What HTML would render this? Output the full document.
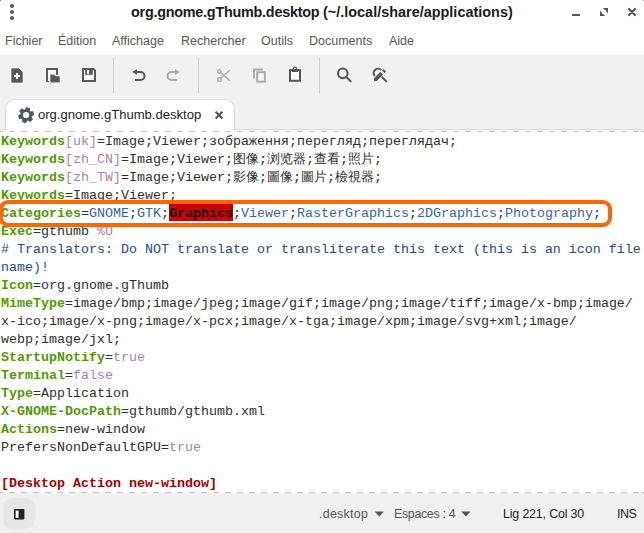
<!DOCTYPE html>
<html><head><meta charset="utf-8">
<style>
html,body{margin:0;padding:0;}
body{width:644px;height:533px;overflow:hidden;background:#fff;position:relative;font-family:"Liberation Sans",sans-serif;}
.abs{position:absolute;}
#title{left:0;top:0;width:644px;height:28px;background:#fff;}
#title .t{position:absolute;left:0;width:644px;text-align:center;top:4px;font-weight:bold;font-size:14.4px;color:#1a1a1a;white-space:nowrap;letter-spacing:-0.12px;}
#menu{left:0;top:28px;width:644px;height:27px;background:#fff;}
#menu span{position:absolute;top:5px;font-size:12.5px;line-height:16px;color:#555;white-space:nowrap;}
#tool{left:0;top:55px;width:644px;height:42px;background:#f1f1f1;}
#tabs{left:0;top:97px;width:644px;height:34px;background:linear-gradient(#f1f1f1 0 32px,#dcdcdc 32px 33px,#fff 33px);}
#tab{left:5px;top:2px;width:230px;height:32px;background:#fff;border-radius:10px 10px 0 0;border:1px solid #dcdcdc;border-bottom:none;box-sizing:border-box;}
#tab .l{position:absolute;left:32px;top:7px;font-size:13.05px;line-height:16px;color:#222;white-space:nowrap;}
.dash{left:0;width:644px;height:1px;background:repeating-linear-gradient(90deg,#c4c4c4 0 6px,transparent 6px 12px);background-position:-3px 0;}
#ed{left:0;top:132px;width:644px;height:360px;background:#fff;overflow:hidden;}
#ed .ln{position:absolute;left:1px;height:18px;line-height:18px;font-family:"Liberation Mono",monospace;font-size:13.333px;white-space:pre;color:#2e2e2e;}
.k{color:#4e9a06;font-weight:bold;}
.p{color:#ad7fa8;}
#ed .c{color:#204a87;}
.b{color:#3465a4;}
.g{color:#a40000;font-weight:bold;}
.cj{display:inline-block;width:13px;overflow:hidden;text-align:center;vertical-align:top;height:18px;}
#status{left:0;top:493px;width:644px;height:40px;background:#f0f0f0;}
#status span{position:absolute;top:13px;font-size:12.4px;line-height:16px;color:#555;white-space:nowrap;}
</style></head><body>
<div id="title" class="abs"><div class="t" style="text-align:left;left:131px;letter-spacing:-0.25px">org.gnome.gThumb.desktop</div><div class="t" style="text-align:left;left:323px;letter-spacing:0.02px">(~/.local/share/applications)</div>
</div>
<div id="menu" class="abs">
<span style="left:5px">Fichier</span><span style="left:58px">Édition</span><span style="left:112px">Affichage</span><span style="left:181px">Rechercher</span><span style="left:261px">Outils</span><span style="left:309px">Documents</span><span style="left:389px">Aide</span>
</div>
<div id="tool" class="abs"></div>
<div id="tabs" class="abs"><div id="tab" class="abs"><span class="l">org.gnome.gThumb.desktop</span></div></div>
<div class="dash abs" style="top:131px"></div>
<div id="ed" class="abs">
<div class="abs" style="left:169px;top:72px;width:64px;height:17px;background:#cc0000"></div>
<div class="ln" style="top:1px"><span class="k">Keywords</span><span class="p">[uk]</span>=Image;Viewer;зображення;перегляд;переглядач;</div>
<div class="ln" style="top:19px"><span class="k">Keywords</span><span class="p">[zh_CN]</span>=Image;Viewer;<span class="cj">图</span><span class="cj">像</span>;<span class="cj">浏</span><span class="cj">览</span><span class="cj">器</span>;<span class="cj">查</span><span class="cj">看</span>;<span class="cj">照</span><span class="cj">片</span>;</div>
<div class="ln" style="top:37px"><span class="k">Keywords</span><span class="p">[zh_TW]</span>=Image;Viewer;<span class="cj">影</span><span class="cj">像</span>;<span class="cj">圖</span><span class="cj">像</span>;<span class="cj">圖</span><span class="cj">片</span>;<span class="cj">檢</span><span class="cj">視</span><span class="cj">器</span>;</div>
<div class="ln" style="top:55px"><span class="k">Keywords</span>=Image;Viewer;</div>
<div class="ln" style="top:73px"><span class="k">Categories</span>=<span class="b">GNOME</span>;<span class="b">GTK</span>;<span style="color:#111;font-weight:bold">Graphics</span>;<span class="b">Viewer</span>;<span class="b">RasterGraphics</span>;<span class="b">2DGraphics</span>;<span class="b">Photography</span>;</div>
<div class="ln" style="top:91px"><span class="k">Exec</span>=gthumb <span class="p">%U</span></div>
<div class="ln c" style="top:109px"># Translators: Do NOT translate or transliterate this text (this is an icon file</div>
<div class="ln c" style="top:127px">name)!</div>
<div class="ln" style="top:145px"><span class="k">Icon</span>=org.gnome.gThumb</div>
<div class="ln" style="top:163px"><span class="k">MimeType</span>=image/bmp;image/jpeg;image/gif;image/png;image/tiff;image/x-bmp;image/</div>
<div class="ln" style="top:181px">x-ico;image/x-png;image/x-pcx;image/x-tga;image/xpm;image/svg+xml;image/</div>
<div class="ln" style="top:199px">webp;image/jxl;</div>
<div class="ln" style="top:217px"><span class="k">StartupNotify</span>=<span class="p">true</span></div>
<div class="ln" style="top:235px"><span class="k">Terminal</span>=<span class="p">false</span></div>
<div class="ln" style="top:253px"><span class="k">Type</span>=Application</div>
<div class="ln" style="top:271px"><span class="k">X-GNOME-DocPath</span>=gthumb/gthumb.xml</div>
<div class="ln" style="top:289px"><span class="k">Actions</span>=new-window</div>
<div class="ln" style="top:307px">PrefersNonDefaultGPU=<span class="p">true</span></div>
<div class="ln" style="top:343px"><span class="g">[Desktop Action new-window]</span></div>
<div class="abs" style="left:-1.5px;top:68px;width:613.5px;height:27px;border:4px solid #ff6600;border-radius:9px;box-sizing:border-box"></div>
</div>
<div class="dash abs" style="top:492px"></div>
<div id="status" class="abs">
<span style="left:319px;letter-spacing:0.3px">.desktop</span><span style="left:394px;letter-spacing:-0.32px">Espaces : 4</span><span style="left:503px;color:#222;letter-spacing:-0.15px">Lig 221, Col 30</span><span style="left:617px;color:#222;letter-spacing:-0.4px">INS</span>
</div>
<svg class="abs" style="left:0;top:0" width="644" height="533" viewBox="0 0 644 533">
<!-- title --><rect x="0" y="0" width="1" height="1" fill="#8a82a8"/><rect x="643" y="0" width="1" height="1" fill="#8a82a8"/>
<g fill="#555"><circle cx="12" cy="6" r="2"/><circle cx="12" cy="12" r="2"/><circle cx="12" cy="18" r="2"/>
<rect x="572" y="14" width="8" height="2"/>
<path d="M602.8 8H608V13.2L606 11.2V10H604.8Z"/>
<path d="M600 10.8V16H605.2L603.2 14H602V12.8Z"/>
</g>
<path d="M629 9L635 15M635 9L629 15" stroke="#555" stroke-width="2.2" stroke-linecap="round" fill="none"/>
<!-- toolbar separators -->
<g fill="#cfcfcf"><rect x="113" y="58" width="1" height="35"/><rect x="198" y="58" width="1" height="35"/><rect x="319" y="58" width="1" height="35"/></g>
<!-- new -->
<path d="M11 69.2a1.2 1.2 0 0 1 1.2-1.2H19L23 72V81.8a1.2 1.2 0 0 1-1.2 1.2H12.2a1.2 1.2 0 0 1-1.2-1.2Z" fill="#585858" stroke="#fafafa" stroke-width="0.8" stroke-opacity="0.8"/>
<path d="M14 75h2v-2h2v2h2v2h-2v2h-2v-2h-2z" fill="#f6f6f6"/>
<!-- open -->
<path d="M49 81H47V69H57V74.8" fill="none" stroke="#585858" stroke-width="2" stroke-linejoin="miter"/>
<rect x="48" y="70" width="8" height="11" fill="#fafafa"/>
<path d="M50 74.2H54.2L55.8 76H60V82.8H50Z" fill="#585858" stroke="#fafafa" stroke-width="0.6"/>
<!-- save -->
<path d="M83 69H93.5L95 70.5V81H83Z" fill="#fafafa" stroke="#585858" stroke-width="2" stroke-linejoin="miter"/>
<rect x="85.2" y="69" width="7.6" height="5.8" fill="#585858"/>
<rect x="87" y="70" width="2" height="4" fill="#fafafa"/>
<!-- undo -->
<path d="M136.5 72H140.5A4 4 0 0 1 140.5 80H135" fill="none" stroke="#565656" stroke-width="2"/>
<path d="M132.3 72L137 69V75Z" fill="#565656"/>
<!-- redo -->
<path d="M175.5 72H171.5A4 4 0 0 0 171.5 80H177" fill="none" stroke="#ababab" stroke-width="2"/>
<path d="M179.7 72L175 69V75Z" fill="#ababab"/>
<!-- cut -->
<g fill="none" stroke="#ababab"><circle cx="219.4" cy="71.4" r="1.8" stroke-width="1.4"/><circle cx="219.4" cy="79.6" r="1.8" stroke-width="1.4"/>
<path d="M220.8 72.8L229.8 80.6M220.8 78.2L229.8 70.2" stroke-width="1.4"/></g>
<!-- copy -->
<path d="M254 78.4V69.4H263" fill="none" stroke="#ababab" stroke-width="2"/>
<rect x="257.2" y="72.2" width="7.6" height="9.4" fill="#f8f8f8" stroke="#ababab" stroke-width="2"/>
<!-- paste -->
<circle cx="295" cy="68.8" r="1.6" fill="#f0f0f0" stroke="#565656" stroke-width="1.3"/>
<rect x="290" y="70" width="10" height="10.8" fill="#fafafa" stroke="#565656" stroke-width="2"/>
<rect x="292" y="69.6" width="6" height="2.4" fill="#565656"/>
<!-- search -->
<circle cx="342.8" cy="73.3" r="4.8" fill="none" stroke="#565656" stroke-width="2.1"/>
<path d="M346.4 77L350.6 81.2" stroke="#565656" stroke-width="2" stroke-linecap="round"/>
<!-- replace -->
<path d="M374.9 76A4.3 4.3 0 0 1 381.1 70" fill="none" stroke="#565656" stroke-width="2.1"/>
<path d="M381.8 77L386.4 81.4" stroke="#565656" stroke-width="2" stroke-linecap="round"/>
<path d="M374 81V78.3L380.3 72L383 74.7L376.7 81Z" fill="#565656" stroke="#f4f4f4" stroke-width="1.2" paint-order="stroke"/>
<path d="M382 70.4L383.5 68.9L386.1 71.5L384.6 73Z" fill="#565656" stroke="#f4f4f4" stroke-width="0.8" paint-order="stroke"/>
<!-- tab gear -->
<g transform="translate(26.1 115.1)" fill="#455a64">
<path stroke="#455a64" stroke-width="1.2" stroke-linejoin="round" fill-rule="evenodd" d="M4.39 -2.96L6.59 -3.36L7.39 -0.39L5.29 0.37L4.76 2.32L6.21 4.03L4.03 6.21L2.32 4.76L0.37 5.29L-0.39 7.39L-3.36 6.59L-2.96 4.39L-4.39 2.96L-6.59 3.36L-7.39 0.39L-5.29 -0.37L-4.76 -2.32L-6.21 -4.03L-4.03 -6.21L-2.32 -4.76L-0.37 -5.29L0.39 -7.39L3.36 -6.59L2.96 -4.39Z M3.8 0A3.8 3.8 0 1 0 -3.8 0A3.8 3.8 0 1 0 3.8 0Z"/>
</g>
<path d="M215.6 111.8L222.4 118.6M222.4 111.8L215.6 118.6" stroke="#555" stroke-width="2.1" stroke-linecap="butt" fill="none"/>
<!-- status -->
<rect x="3" y="498" width="32" height="31" rx="9" fill="#e6e6e6"/>
<rect x="14" y="509" width="10.4" height="10.4" rx="0.8" fill="#222"/>
<rect x="15.6" y="510.6" width="3" height="7.2" fill="#fff"/>
<path d="M374.6 511.6H384L379.3 516.4Z" fill="#555"/>
<path d="M461.2 511.6H470.6L465.9 516.4Z" fill="#555"/>
</svg>
</body></html>
